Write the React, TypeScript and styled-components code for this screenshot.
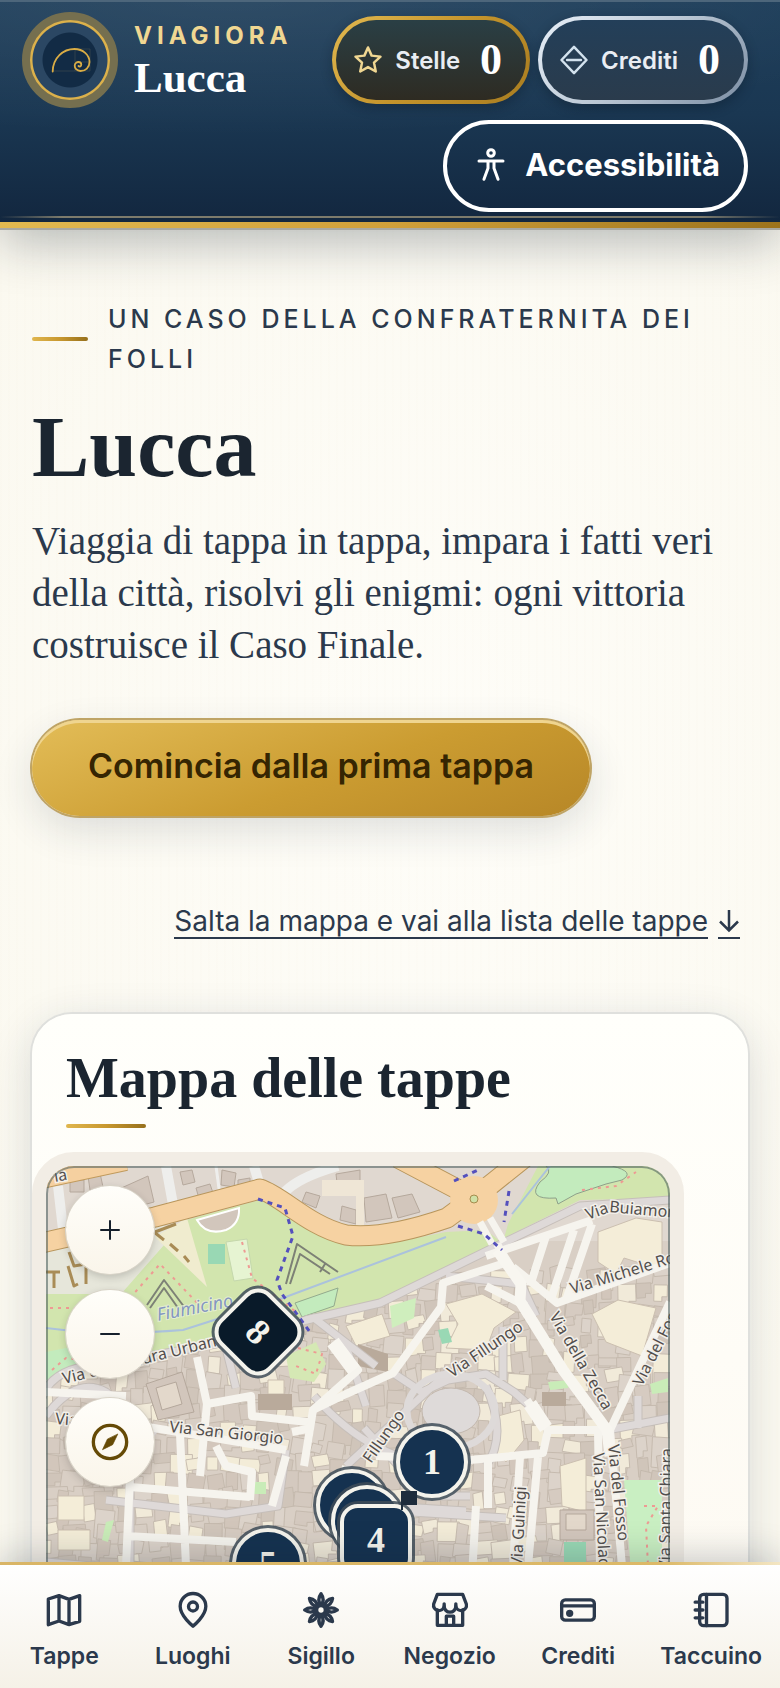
import React from 'react';
import styled, { createGlobalStyle, css } from 'styled-components';

const sans = `Inter, 'Liberation Sans', sans-serif`;
const serif = `'Liberation Serif', serif`;
const goldLine = 'linear-gradient(90deg, #e0b64e, #c8982f 50%, #96701c)';

const GlobalStyle = createGlobalStyle`
  *, *::before, *::after { box-sizing: border-box; }
  body { margin: 0; background: #fcfaf2; color: #2b394c; font-family: ${sans}; }
  h1, h2, p { margin: 0; }
  button { font: inherit; color: inherit; cursor: pointer; }
`;

const Shell = styled.div`
  display: flex;
  flex-direction: column;
  height: 100vh;
  overflow: hidden;
`;

/* ---------- Header ---------- */

const Header = styled.header`
  position: relative;
  z-index: 2;
  flex: none;
  display: flex;
  align-items: flex-start;
  gap: 16px;
  padding: 12px 32px 16px 22px;
  background:
    linear-gradient(#4d667b, #4d667b) 0 0 / 100% 2px no-repeat,
    linear-gradient(90deg, #e2b950, #d0a03a 50%, #9c731c) 0 100% / 100% 6px no-repeat,
    linear-gradient(90deg, transparent, #7d7b6c 8%, #7d7b6c 90%, transparent) 0 calc(100% - 10px) / 100% 2px no-repeat,
    radial-gradient(90% 60% at 30% 0, #ffffff12, transparent),
    linear-gradient(180deg, #1f3f5b 0%, #1a3752 50%, #12263e 100%);
  box-shadow: 0 2px 0 #a8a8a2, 0 14px 48px rgba(20, 32, 48, 0.3);
`;

const Brand = styled.div`
  display: flex;
  align-items: center;
  gap: 16px;
`;

const Seal = styled.div`
  display: grid;
  place-items: center;
  width: 96px;
  height: 96px;
  border: 8px solid #756f4f;
  border-radius: 50%;
  background: radial-gradient(circle, #122b45 0 27px, #2b4763 28px 37px, #dcb14b 38px);
`;

const BrandText = styled.div`
  display: flex;
  flex-direction: column;
  padding-top: 4px;
`;

const BrandName = styled.span`
  font-size: 24px;
  line-height: 32px;
  font-weight: 700;
  letter-spacing: 5px;
  color: #f0d792;
`;

const BrandCity = styled.span`
  font: 700 43px/52px ${serif};
  color: #fff;
`;

const Actions = styled.div`
  flex: 1;
  display: flex;
  flex-wrap: wrap;
  justify-content: flex-end;
  gap: 16px 8px;
  padding-top: 4px;
`;

const Counter = styled.div<{ $tone: 'gold' | 'silver' }>`
  display: flex;
  align-items: center;
  gap: 12px;
  height: 88px;
  padding: 0 24px 0 17px;
  border: 4px solid transparent;
  border-radius: 44px;
  font-size: 24px;
  font-weight: 600;
  color: #e9edf3;
  box-shadow: 0 4px 12px rgba(6, 16, 28, 0.3);
  ${({ $tone }) =>
    $tone === 'gold'
      ? css`
          background:
            linear-gradient(180deg, #2a3f45, #2e2b22) padding-box,
            linear-gradient(135deg, #e2b950, #c4942c 50%, #a87c20) border-box;
          svg { color: #f0d792; }
        `
      : css`
          background:
            linear-gradient(180deg, #233f59, #2a3b4c) padding-box,
            linear-gradient(135deg, #e8f0f9, #b9c6d3 50%, #7b8da3) border-box;
          svg { color: #d3e2ee; }
        `}
`;

const CounterValue = styled.strong`
  margin-left: 8px;
  font: 700 44px/48px ${serif};
  color: #fff;
`;

const AccessButton = styled.button`
  display: flex;
  align-items: center;
  gap: 16px;
  height: 92px;
  padding: 0 24px 2px 26px;
  border: 4px solid #fff;
  border-radius: 46px;
  background: transparent;
  color: #fff;
  font: 700 31px/40px ${sans};
`;

/* ---------- Main ---------- */

const Main = styled.main`
  flex: 1;
  min-height: 0;
  overflow: hidden auto;
  scrollbar-width: none;
  padding: 71px 32px 0;
  background:
    repeating-linear-gradient(90deg, #e8d9c008 0 2px, transparent 2px 8px),
    radial-gradient(70% 60% at 55% 40%, #fefdf8, #fbf9f0);
`;

const Eyebrow = styled.p`
  display: flex;
  align-items: center;
  gap: 20px;
  font-size: 25px;
  line-height: 40px;
  font-weight: 500;
  letter-spacing: 4px;
  text-transform: uppercase;
  &::before {
    content: '';
    flex: none;
    width: 56px;
    height: 4px;
    border-radius: 2px;
    background: ${goldLine};
  }
`;

const Title = styled.h1`
  margin-top: 24px;
  font: 700 86px/88px ${serif};
  color: #1b2530;
`;

const Lead = styled.p`
  margin-top: 24px;
  font: 400 39px/52px ${serif};
`;

const StartButton = styled.button`
  display: block;
  height: 96px;
  margin-top: 49px;
  padding: 0 56px 4px;
  border: 0;
  border-radius: 48px;
  background: linear-gradient(160deg, #e3bd58, #cb9c31 55%, #b78727);
  box-shadow:
    0 0 0 2px #bfa466,
    inset 0 3px 0 #efd590,
    0 14px 40px rgba(30, 45, 65, 0.14);
  color: #352502;
  font: 600 34px/40px ${sans};
`;

const SkipLink = styled.a`
  display: flex;
  justify-content: flex-end;
  align-items: center;
  gap: 10px;
  min-height: 88px;
  margin-top: 62px;
  padding-right: 8px;
  color: #2b394c;
  font-size: 28px;
  line-height: 32px;
  font-weight: 400;
  text-decoration: none;
  span { border-bottom: 2px solid #2b394c; }
`;

const ArrowBox = styled.span`
  display: flex;
  align-items: center;
  width: 22px;
  height: 34px;
`;

const Card = styled.section`
  margin-top: 48px;
  padding-top: 32px;
  border-radius: 40px 40px 0 0;
  background: linear-gradient(180deg, #fffffb, #fdf9f1);
  box-shadow: 0 0 0 2px #dfe0dd, 0 10px 44px rgba(25, 45, 70, 0.16);
`;

const CardTitle = styled.h2`
  margin: 0 34px;
  font: 700 56px/64px ${serif};
  color: #1b2530;
  &::after {
    content: '';
    display: block;
    width: 80px;
    height: 4px;
    margin-top: 14px;
    border-radius: 2px;
    background: ${goldLine};
  }
`;

const MapFrame = styled.div`
  margin: 24px 64px 0 0;
  border: 14px solid #f2ede5;
  border-radius: 42px;
  background: #f2ede5;
`;

const MapView = styled.div`
  position: relative;
  height: 520px;
  overflow: hidden;
  border-radius: 28px;
  &::after {
    content: '';
    position: absolute;
    inset: 0;
    border-radius: inherit;
    box-shadow: inset 0 0 0 2px rgba(70, 90, 90, 0.55);
    pointer-events: none;
  }
`;

const MapControls = styled.div`
  position: absolute;
  top: 20px;
  left: 20px;
  display: flex;
  flex-direction: column;
  gap: 16px;
`;

const MapButton = styled.button<{ $color?: string }>`
  display: grid;
  place-items: center;
  width: 88px;
  height: 88px;
  padding: 0;
  border: 0;
  border-radius: 50%;
  background: linear-gradient(180deg, #fffefa, #faf5ea);
  color: ${({ $color }) => $color ?? '#16202c'};
  box-shadow: 0 0 0 1px #d9d4c8, 0 3px 8px rgba(30, 30, 30, 0.22);
  &:last-child { margin-top: 4px; }
`;

const Pin = styled.button<{ $x: number; $y: number; $shape?: 'square' | 'diamond' }>`
  position: absolute;
  left: ${({ $x }) => $x}px;
  top: ${({ $y }) => $y}px;
  display: grid;
  place-items: center;
  width: 72px;
  height: 72px;
  padding: 0;
  border: 4px solid #f4f3ec;
  border-radius: ${({ $shape }) => ($shape ? '18px' : '50%')};
  background: ${({ $shape }) => ($shape === 'diamond' ? '#091a29' : '#153250')};
  box-shadow: 0 0 0 3px rgba(62, 76, 88, 0.85);
  transform: translate(-50%, -50%) ${({ $shape }) => ($shape === 'diamond' ? 'rotate(45deg)' : '')};
  color: #f4f3ec;
  font: 700 36px/40px ${serif};
`;

const Flag = styled.svg`
  position: absolute;
  left: 354px;
  top: 324px;
`;

/* ---------- Bottom navigation ---------- */

const TabBar = styled.nav`
  position: relative;
  z-index: 2;
  flex: none;
  display: flex;
  height: 126px;
  padding-top: 28px;
  background:
    linear-gradient(90deg, #d9b566, #dcb968 85%, #f3e6c4) 0 0 / 100% 3px no-repeat,
    linear-gradient(180deg, #ffffff, #f5f1e7);
  box-shadow: 0 -6px 32px rgba(25, 35, 50, 0.22);
`;

const Tab = styled.a`
  flex: 1 1 0;
  min-width: min-content;
  display: flex;
  flex-direction: column;
  align-items: center;
  gap: 10px;
  padding: 0 18px;
  color: #2b394c;
  font-size: 23px;
  line-height: 32px;
  font-weight: 600;
  text-decoration: none;
`;

/* ---------- Icons ---------- */

const Icon = ({ size, width = 2, children }: { size: number; width?: number; children: React.ReactNode }) => (
  <svg
    width={size}
    height={size}
    viewBox="0 0 24 24"
    fill="none"
    stroke="currentColor"
    strokeWidth={width}
    strokeLinecap="round"
    strokeLinejoin="round"
    aria-hidden="true"
  >
    {children}
  </svg>
);

const tabs = [
  {
    label: 'Tappe',
    icon: <path d="M2.6 5.4 9 3.4l6 2.2 6.4-2.2v15.4L15 20.8l-6-2.2-6.4 2.2zM9 3.4v15.2M15 5.6v15.2" />,
  },
  {
    label: 'Luoghi',
    icon: (
      <>
        <path d="M12 21.7S4.3 15.7 4.3 9.8a7.7 7.7 0 0 1 15.4 0c0 5.9-7.7 11.9-7.7 11.9z" />
        <circle cx="12" cy="9.9" r="2.7" />
      </>
    ),
  },
  {
    label: 'Sigillo',
    icon: (
      <>
        {[0, 45, 90, 135, 180, 225, 270, 315].map((a) => (
          <path key={a} d="M12 9.4C10.4 7 10.5 4.200 12 2.200c1.500 2 1.600 4.800 0 7.200z" strokeWidth="2" transform={`rotate(${a} 12 12)`} />
        ))}
        <circle cx="12" cy="12" r="4.200" fill="currentColor" stroke="none" />
        <circle cx="12" cy="12" r="1.600" fill="#fbf9f3" stroke="none" />
      </>
    ),
  },
  {
    label: 'Negozio',
    icon: (
      <>
        <path d="M4.400 2.600h15.200l2.200 5.800a3.200 3.200 0 0 1-6.300 1.400 3.500 3.500 0 0 1-7 0A3.200 3.200 0 0 1 2.200 8.400z" />
        <path d="M8.500 8.300v1.500M15.500 8.300v1.500M4.400 12v9.200h15.200V12M9.800 21v-5.300h4.400V21" />
      </>
    ),
  },
  {
    label: 'Crediti',
    icon: (
      <>
        <rect x="2.200" y="5.900" width="19.600" height="12.200" rx="2.200" />
        <path d="M2.200 9.500h19.600" />
        <circle cx="7" cy="14" r="1.200" fill="currentColor" />
      </>
    ),
  },
  {
    label: 'Taccuino',
    icon: (
      <>
        <rect x="5.200" y="2.600" width="16.400" height="18.800" rx="2.400" />
        <path d="M9.300 2.600v18.800M2.500 7.300h4.600M2.500 12h4.600M2.500 16.700h4.600" />
      </>
    ),
  },
];

/* ---------- City map ---------- */

const blocks = (() => {
  let seed = 41;
  const rnd = () => ((seed = (seed * 16807) % 2147483647) / 2147483647);
  const tones = ['#d4c9bf', '#d0c5ba', '#d9cfc5', '#d6cbc1', '#f3ecd8', '#f1ead9', '#d2c6bb', '#dcd3ca'];
  const out: { d: string; fill: string }[] = [];
  for (let y = 100; y < 520; y += 17) {
    for (let x = -6; x < 624; x += 18) {
      const w = 9 + rnd() * 15;
      const h = 8 + rnd() * 14;
      const s = (rnd() - 0.5) * 6;
      const px = x + rnd() * 7;
      const py = y + rnd() * 7;
      const notch = rnd() > 0.5 ? `l${-w * 0.4} 0 l0 ${h * 0.4} l${-w * 0.6} ${-s}` : `l${-w} ${-s}`;
      out.push({ d: `M${px} ${py} l${w} ${s} l${-s} ${h} ${notch}z`, fill: tones[Math.floor(rnd() * tones.length)] });
    }
  }
  return out;
})();

const lanes = [
  'M260 154 334 137 451 80 534 40 624 34',
  'M-4 232Q6 200 60 198L170 178 268 152 330 200',
  'M457 161V214M347 207 376 226 402 214 440 208 468 226 484 240',
  'M268 230Q330 300 404 298M402 206 300 300M318 262 380 330 424 330',
  'M300 180 320 240M440 220 Q462 270 440 300M561 264 624 252',
  'M84 260V400M0 396 160 410 330 396M180 182 190 222M240 284 232 340 180 348 60 334',
  'M334 344 460 352M490 150 475 118 400 110M330 400 340 340 420 345M592 230V262',
  'M0 250Q30 210 60 226L110 268',
];
const streets = [
  'M451 78 475 118 474 135 517 204 561 264M459 97 397 117 395 141 347 207 300 228 267 244 258 300',
  'M287 176 312 204 267 244M467 101 511 137 624 97M484 120 500 70M506 130 528 64M520 134 546 58M440 90 546 54',
  'M564 264 624 136M564 264 576 400 580 520M552 264 554 400M502 264H561M481 234 502 264 497 287 424 294',
  'M474 291 467 400M492 291 482 400M442 294V342M424 294 330 290',
  'M151 191 161 238 154 310M161 238 205 230 206 250 262 256M170 280 180 300 206 306 204 334M84 321 204 331',
  'M84 258 240 284M134 268 140 400M240 290 226 340M246 266 266 262M0 226 80 230M84 310 80 400M80 370 190 376',
  'M300 300 290 346 330 352M430 340 426 410M440 120 480 140',
];
const orange = 'M-4 77 109 51 214 23C236 30 262 60 300 69 334 73 372 62 401 52L428 32 352-8M428 32 478-8';

const labels: [string, number, number, number][] = [
  ['Via delle Mura Urbane', 18, 218, -14],
  ['Via San Giorgio', 123, 266, 6],
  ['Via', 9, 258, 4],
  ['Fillungo', 325, 298, -55],
  ['Via Fillungo', 406, 212, -34],
  ['Via', 542, 54, -20],
  ['Buiamonti', 563, 46, 5],
  ['Via Michele Rosi', 526, 128, -17],
  ['Via della Zecca', 503, 150, 60],
  ["Via del Fosso", 596, 221, -63],
  ['Via del Fosso', 562, 279, 84],
  ['Via San Nicolao', 547, 287, 87],
  ['Via Guinigi', 476, 401, -87],
  ['Via Santa Chiara', 624, 404, -89],
  ['ia', 9, 16, -10],
];

const CityMap = () => (
  <svg width="100%" height="520" viewBox="0 0 624 520" preserveAspectRatio="xMinYMin slice" role="img" aria-label="Mappa di Lucca">
    <rect width="624" height="520" fill="#d9cfc5" />
    <rect width="624" height="75" fill="#e0d8d0" />
    <g stroke="#c3b8ac" strokeWidth="0.900">
      {blocks.map((b, i) => (
        <path key={i} d={b.d} fill={b.fill} />
      ))}
    </g>
    <g fill="#d2c6bc" stroke="#b5a89c">
      <path d="M24 14h14v12h-14zM42 10l12-3 3 14-13 3zM62 28l40-18 6 26-44 12zM134 6l12-2 3 12-12 3zM150 22l14-4 4 12-14 6zM176 4l14 3-2 14-13-2zM192 14l12-2v12h-12zM290 8l24-4v26l-22-4zM318 32l22-4 6 24-26 4zM296 40l14 4v14l-16-4zM346 32l20-4 8 18-22 6zM260 26l14 4-4 12-14-6z" />
    </g>
    <path d="M276 14h42v46h-8V30h-34z" fill="#efe6d6" />
    <g fill="none" stroke="#eeeeec">
      <path d="M12 20 18 72M120 0 128 44M208 0 214 20M237 28 Q250 12 292 0" strokeWidth="10" />
      <path d="M170 0 174 30" strokeWidth="3" />
    </g>
    <path d="M0 84 109 60 150 60 100 120 70 130H0z" fill="#e6e6da" />
    <path d="M0 128H75L140 54 214 34 245 45 300 80 340 78 400 66 440 64 455 76 334 135 262 155 110 192 0 196z" fill="#d2e5ae" />
    <path d="M462 58 492 0H624V32L534 34 458 72z" fill="#d2e5ae" />
    <path d="M500 0H566Q590 6 576 14L560 18 530 28 512 38 510 32Q480 34 494 16 508 6 500 0z" fill="#c3ebbd" stroke="#8ea08a" />
    <path d="M0 186 30 180 40 200 0 214z" fill="#c3ebbd" />
    <path d="M109 71 141 52 161 121z" fill="#f0eccf" />
    <rect x="162" y="78" width="17" height="20" fill="#99d8b4" />
    <path d="M180 76 201 73 207 112 188 115z" fill="#e6f4d2" stroke="#c4d7ac" />
    <path d="M151 54 193 42Q194 58 180 64 160 70 151 54z" fill="#d2c6bc" stroke="#fff" strokeWidth="2" />
    <path d="M249 137 292 122 288 140 256 151z" fill="#c3ebbd" stroke="#93aa8d" />
    <path d="M344 140 370 132 368 152 346 162z" fill="#cfeebd" />
    <path d="M240 190 270 176 280 198 268 216 244 212z" fill="#d5e8b4" />
    <g fill="#f4edd8" stroke="#cbbfb0">
      <path d="M400 138 436 128 470 146 448 162 440 184 400 182 412 158zM552 66 590 52 616 56V104L578 92 570 108 552 96zM546 148 572 134 610 142 596 190 560 176zM452 250 474 244 478 274 460 296 448 284zM514 300 540 292V346L516 340zM222 214h16v14h-16zM300 160l36-12 8 22-34 10zM12 330h26v24h-26zM12 364h32v20h-32z" />
    </g>
    <path d="M100 218 136 206 148 246 112 254zM514 344h34v30h-34z" fill="#d2c6bc" stroke="#b5a89c" />
    <path d="M110 222 130 216 136 238 116 244zM520 348h20v16h-20z" fill="#e3d8cb" stroke="#b5a89c" />
    <path d="M212 228h34v16h-34zM312 178l30 10v18l-30-6zM496 226h24v14h-24z" fill="#b9aa9b" />
    <path d="M392 164 402 162 406 176 396 178z" fill="#99d8b4" />
    <path d="M578 314H616V420H586z" fill="#c9efc2" />
    <path d="M518 376H540V420H518z" fill="#99d8b4" />
    <path d="M60 356 68 354 62 376 56 374zM208 316h12v12h-12zM502 216 524 214 522 222 504 224zM604 218 622 212V226L606 228z" fill="#c9ecb8" />
    <g fill="none" strokeLinejoin="round">
      {lanes.map((d) => <path key={d} d={d} stroke="#c6bfba" strokeWidth="9" />)}
      {lanes.map((d) => <path key={d} d={d} stroke="#ded9d8" strokeWidth="7" />)}
      <ellipse cx="405" cy="245" rx="44" ry="37" stroke="#dedad9" strokeWidth="7" />
      <ellipse cx="405" cy="245" rx="29" ry="23" fill="#dedad9" stroke="#c3b8ae" />
      {streets.map((d) => <path key={d} d={d} stroke="#f6f4ee" strokeWidth="8" />)}
      <path d="M451 84 475 118 474 135 517 204 561 264 564 290" stroke="#f8f6f0" strokeWidth="11" />
      <path d="M287 176 308 204M484 238 500 262" stroke="#f8f6f0" strokeWidth="14" />
      <path d="M0 162Q60 170 137 164L237 132 400 71M466 48 504 0" stroke="#abc2dc" strokeWidth="2" />
      <path d="M-4 14 80-4" stroke="#c09a5c" strokeWidth="18" />
      <path d="M-4 14 80-4" stroke="#f5d0a0" strokeWidth="16" />
      <path d={orange} stroke="#b8965c" strokeWidth="21" />
      <path d={orange} stroke="#f6d2a2" strokeWidth="19" />
      <circle cx="428" cy="34" r="24" fill="#f6d2a2" stroke="none" />
      <circle cx="428" cy="33" r="4" fill="#cfe0a6" stroke="#a58c4e" />
      <path d="M434 56 446 78M444 52 458 76" stroke="#f6f4ee" strokeWidth="7" />
      <path d="M212 33 239 42 247 70 231 114 236 128 264 166M408 15 432 4M463 25 458 56M412 60 438 68 456 84" stroke="#5450bd" strokeWidth="3" strokeDasharray="5 5" />
      <path d="M84 132 114 98 156 142M196 76 206 112 250 146M4 142H40M6 204 20 192 34 194M536 24 570 20 590 6M252 182l24 6-6 20-20-8M598 340l14 0-12 20 2 40" stroke="#ee9a93" strokeWidth="2" strokeDasharray="3 5" />
      <path d="M101 139 118 114 139 142M104 142 118 122 132 142M240 118 251 78 292 106M244 118 254 88 284 108M279 98l-5 8" stroke="#7d8176" strokeWidth="2" />
      <path d="M23 86 28 100 40 98V118M22 100 28 120 32 118M0 106H14M8 106V122M109 66 130 58M108 66 118 74M124 78l8 7M138 90l5 6" stroke="#a98c56" strokeWidth="3" />
    </g>
    <text x="112" y="155" transform="rotate(-11 112 155)" fontFamily="'Noto Sans', sans-serif" fontStyle="italic" fontSize="18" fill="#8497c0" stroke="#e4efd0" strokeWidth="2" paintOrder="stroke">Fiumicino</text>
    <g fontFamily="'Noto Sans', sans-serif" fontSize="16" fill="#524e4c" stroke="#f3f0ea" strokeWidth="3" paintOrder="stroke">
      {labels.map(([t, x, y, a], i) => (
        <text key={i} x={x} y={y} transform={`rotate(${a} ${x} ${y})`}>{t}</text>
      ))}
    </g>
  </svg>
);

export default function App() {
  return (
    <Shell>
      <GlobalStyle />
      <Header>
        <Brand>
          <Seal>
            <svg width="80" height="80" viewBox="0 0 80 80" fill="none" aria-hidden="true">
              <path d="M23 51H60V29H45V51M45 42H60" stroke="#5d6254" strokeWidth="0.800" opacity="0.500" />
              <path d="M22.700 51.500C23 38 33 29 44.500 29 53 29 59.500 35 59.500 42 59.500 47.500 55.500 51 50.500 51 46.500 51 44.700 48 44.700 45.800 44.700 43 47 42 48.500 42 50.500 42 51.300 43.500 51.300 44.800 51.300 46.500 49.500 47 48.500 46" stroke="#d9ac45" strokeWidth="1.800" strokeLinecap="round" />
            </svg>
          </Seal>
          <BrandText>
            <BrandName>VIAGIORA</BrandName>
            <BrandCity>Lucca</BrandCity>
          </BrandText>
        </Brand>
        <Actions>
          <Counter $tone="gold">
            <Icon size={30}>
              <path d="M12 2 14.900 8.500 22 9.300 16.800 14.100 18.200 21.200 12 17.700 5.800 21.200 7.200 14.100 2 9.300 9.100 8.500z" />
            </Icon>
            Stelle <CounterValue>0</CounterValue>
          </Counter>
          <Counter $tone="silver">
            <Icon size={30}>
              <path d="M12 1.500 22 12 12 22.500 2 12zM6.500 12h11" />
            </Icon>
            Crediti <CounterValue>0</CounterValue>
          </Counter>
          <AccessButton type="button">
            <Icon size={36}>
              <circle cx="12" cy="4" r="2.200" />
              <path d="M4 9.300h16M10 9.600v4.600L7.300 21.500M14 9.600v4.600l2.700 7.300" />
            </Icon>
            Accessibilità
          </AccessButton>
        </Actions>
      </Header>

      <Main>
        <Eyebrow>Un caso della Confraternita dei Folli</Eyebrow>
        <Title>Lucca</Title>
        <Lead>
          Viaggia di tappa in tappa, impara i fatti veri della città, risolvi gli enigmi: ogni vittoria costruisce il Caso Finale.
        </Lead>
        <StartButton type="button">Comincia dalla prima tappa</StartButton>
        <SkipLink href="#tappe">
          <span>Salta la mappa e vai alla lista delle tappe</span>
          <ArrowBox>
            <svg width="22" height="24" viewBox="0 0 22 24" fill="none" stroke="currentColor" strokeWidth="2.500" aria-hidden="true">
              <path d="M11 1v20M2 12.500l9 9 9-9" />
            </svg>
          </ArrowBox>
        </SkipLink>
        <Card>
          <CardTitle>Mappa delle tappe</CardTitle>
          <MapFrame>
            <MapView>
              <CityMap />
              <Pin $x={212} $y={166} $shape="diamond">8</Pin>
              <Pin $x={386} $y={296}>1</Pin>
              <Pin $x={306} $y={339} aria-label="Tappa 2" />
              <Pin $x={321} $y={355} aria-label="Tappa 3" />
              <Pin $x={330} $y={374} $shape="square">4</Pin>
              <Pin $x={222} $y={398}>5</Pin>
              <Flag width="18" height="20" viewBox="0 0 18 20" aria-hidden="true">
                <path d="M1 1H17V15H3V20H1z" fill="#1d2c3c" />
              </Flag>
              <MapControls>
                <MapButton type="button" aria-label="Ingrandisci">
                  <Icon size={24}><path d="M12 3v18M3 12h18" /></Icon>
                </MapButton>
                <MapButton type="button" aria-label="Riduci">
                  <Icon size={24}><path d="M3 12h18" /></Icon>
                </MapButton>
                <MapButton type="button" aria-label="Orienta" $color="#654a06">
                  <Icon size={40}>
                    <circle cx="12" cy="12" r="10" />
                    <path d="M16.600 7.400 13.600 13.600 7.500 16.600 10.400 10.400z" fill="currentColor" strokeWidth="0.400" />
                  </Icon>
                </MapButton>
              </MapControls>
            </MapView>
          </MapFrame>
        </Card>
      </Main>

      <TabBar>
        {tabs.map((t) => (
          <Tab key={t.label} href={`#${t.label.toLowerCase()}`}>
            <Icon size={40}>{t.icon}</Icon>
            {t.label}
          </Tab>
        ))}
      </TabBar>
    </Shell>
  );
}
